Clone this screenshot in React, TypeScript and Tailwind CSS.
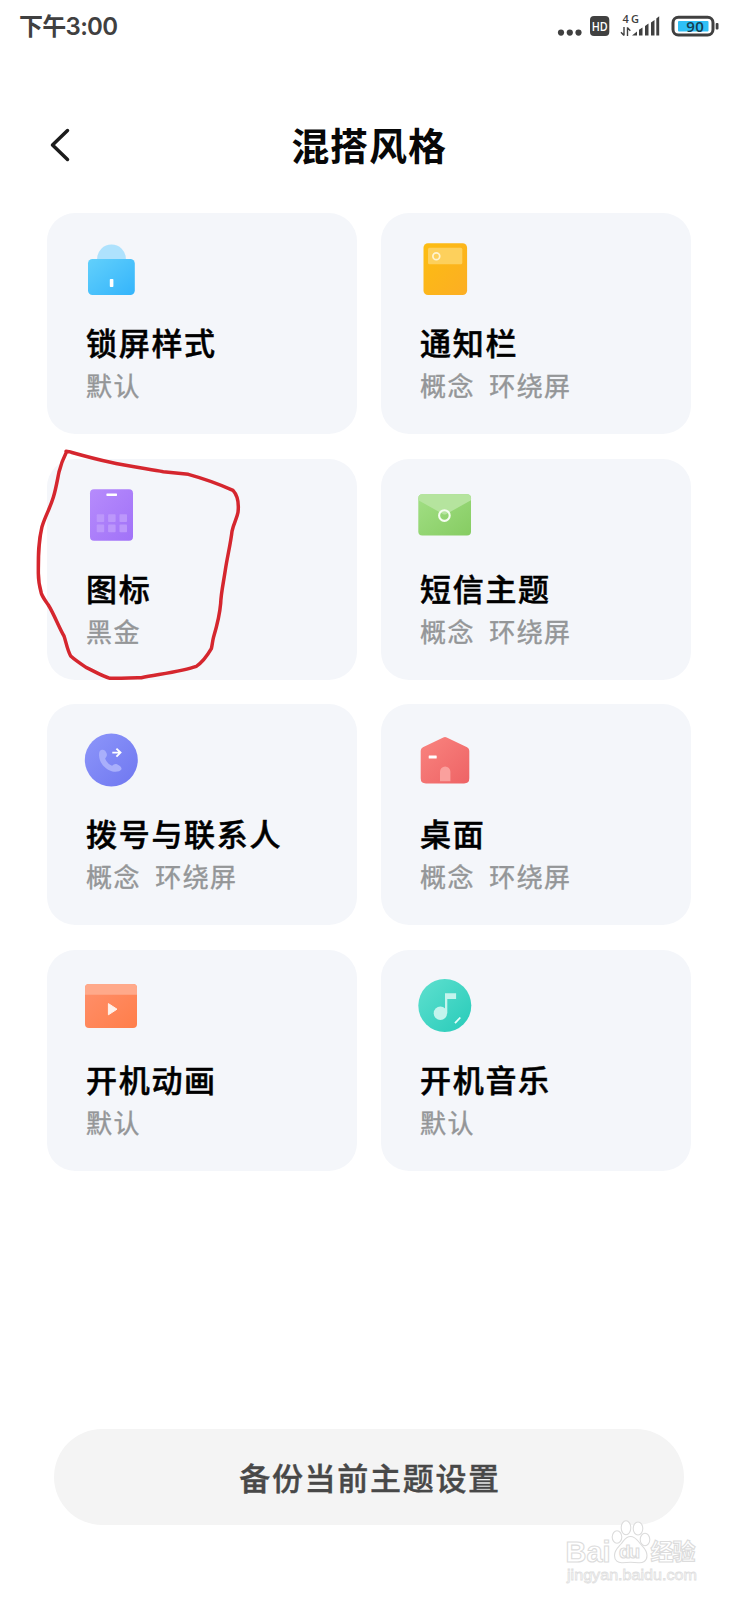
import type { ReactNode } from "react";

function Gradient({ id, from, to }: { id: string; from: string; to: string }) {
  return (
    <defs>
      <linearGradient id={id} x1="0" y1="0" x2="1" y2="1">
        <stop offset="0" stopColor={from} />
        <stop offset="1" stopColor={to} />
      </linearGradient>
    </defs>
  );
}

const LockIcon = (
  <>
    <Gradient id="lock" from="#62d0fb" to="#34b4fb" />
    <circle cx="30.5" cy="18.9" r="14.4" fill="#aee2fd" />
    <rect x="7" y="19" width="46.8" height="36" rx="4.5" fill="url(#lock)" />
    <rect x="28.8" y="39" width="3.6" height="8" rx="0.8" fill="#fff" />
  </>
);

const NotificationIcon = (
  <>
    <Gradient id="notification" from="#fcbd11" to="#fcae24" />
    <rect x="8.5" y="3.3" width="43.6" height="51.8" rx="4.5" fill="url(#notification)" />
    <rect x="13" y="7.7" width="34.3" height="16.6" rx="1.5" fill="#fdd05c" />
    <circle cx="21.3" cy="16.2" r="3.4" fill="none" stroke="#fff3cf" strokeWidth="1.7" />
  </>
);

const GridIcon = (
  <>
    <Gradient id="grid" from="#b68bfc" to="#a172f8" />
    <rect x="9" y="3.3" width="43" height="51.4" rx="4" fill="url(#grid)" />
    <rect x="25.4" y="7.5" width="10.6" height="2.4" rx="0.6" fill="#fff" />
    {[28.3, 38.6].map((y) =>
      [15.7, 27.1, 38.5].map((x) => (
        <rect key={`${x}-${y}`} x={x} y={y} width="7.5" height="7.7" rx="0.8" fill="#bc97fb" />
      )),
    )}
  </>
);

const MessageIcon = (
  <>
    <Gradient id="message" from="#a2df85" to="#86cc62" />
    <rect x="3.3" y="8.3" width="52.7" height="41.3" rx="4" fill="url(#message)" />
    <path d="M3.3 14.3v-2a4 4 0 0 1 4-4H52a4 4 0 0 1 4 4v2L31 28.2q-1.3.8-2.7 0z" fill="#b5e49e" />
    <circle cx="29.4" cy="29.6" r="5.3" fill="none" stroke="#f5fdf0" strokeWidth="2.1" />
  </>
);

const PhoneIcon = (
  <>
    <Gradient id="phone" from="#8d96fa" to="#6f77f0" />
    <circle cx="30.3" cy="28.9" r="26.5" fill="url(#phone)" />
    <path
      d="M20.2 18.9c2.6-.8 4.6.6 5.5 3.6.7 2.5-.7 3.7-1.6 5 1.2 3.3 3.8 6 6.9 7.3 1.5-1 2.8-2.4 5-1.5 2.8 1.1 4.9 3.2 4.5 5-1.2 2.3-5.7 3.1-9.1 2.1-7.9-2.2-13.3-9-13.4-16.700 0-2.500.8-4.500 2.200-4.800z"
      fill="#a9affb"
    />
    <path d="M31.3 21.6h8M35.4 17.6l4.1 4-4.1 4" fill="none" stroke="#fff" strokeWidth="1.9" />
  </>
);

const HomeIcon = (
  <>
    <Gradient id="home" from="#f9847f" to="#ee6365" />
    <path
      d="M28.3 6.5q1.7-.9 3.4 0l20.4 9.8q2.2 1.1 2.2 3.5v27.4q0 5.2-5.2 5.2H10.900q-5.200 0-5.200-5.200V19.800q0-2.400 2.200-3.500z"
      fill="url(#home)"
    />
    <rect x="13.7" y="24.6" width="8" height="3" rx="0.5" fill="#fff" />
    <path d="M25 50.300v-9.500a5.200 5.200 0 0 1 10.400 0v9.500z" fill="#faa09d" />
  </>
);

const AnimationIcon = (
  <>
    <Gradient id="animation" from="#ff906b" to="#ff7e4a" />
    <rect x="4" y="7" width="52" height="44" rx="4" fill="url(#animation)" />
    <path d="M4 17.8V11a4 4 0 0 1 4-4h44a4 4 0 0 1 4 4v6.800z" fill="#ffa98a" />
    <path d="M27.4 26.6v11.2l8.600-5.600z" fill="#fff1ea" stroke="#fff1ea" strokeLinejoin="round" />
  </>
);

const MusicIcon = (
  <>
    <Gradient id="music" from="#5fe0cf" to="#27cbb9" />
    <circle cx="29.8" cy="28.6" r="26.5" fill="url(#music)" />
    <circle cx="25.4" cy="36.2" r="6.7" fill="#c3f4ed" />
    <path d="M30 16.3h11.1V22h-8.8v14H30z" fill="#c3f4ed" />
    <path d="M40 46.2l5.3-5.700" stroke="#e6fffb" strokeWidth="1.8" />
  </>
);

const items: { title: string; value: string; icon: ReactNode }[] = [
  { title: "锁屏样式", value: "默认", icon: LockIcon },
  { title: "通知栏", value: "概念  环绕屏", icon: NotificationIcon },
  { title: "图标", value: "黑金", icon: GridIcon },
  { title: "短信主题", value: "概念  环绕屏", icon: MessageIcon },
  { title: "拨号与联系人", value: "概念  环绕屏", icon: PhoneIcon },
  { title: "桌面", value: "概念  环绕屏", icon: HomeIcon },
  { title: "开机动画", value: "默认", icon: AnimationIcon },
  { title: "开机音乐", value: "默认", icon: MusicIcon },
];

function StatusBar() {
  return (
    <div className="flex h-[54px] items-center justify-between pl-[19px] pr-[17px] text-[#404040]">
      <span className="font-['Inter','Noto_Sans_CJK_SC',sans-serif] text-[24px] font-semibold tracking-[-0.7px]">下午3:00</span>
      <svg width="164" height="54" viewBox="0 0 164 54" className="font-['Open_Sans',sans-serif]">
        <g fill="#404040">
          <circle cx="4" cy="32.6" r="3.1" />
          <circle cx="12.8" cy="32.6" r="3.1" />
          <circle cx="21.5" cy="32.6" r="3.1" />
          <rect x="33" y="16" width="19.3" height="20" rx="4" />
          <text x="34.7" y="30.6" fontSize="12.5" fontWeight="600" fill="#fff" textLength="16" lengthAdjust="spacingAndGlyphs">HD</text>
          <text x="65.6" y="22.8" fontSize="11" fontWeight="600" textLength="16.500">4G</text>
          <path d="M67 27v8.500M67 35.500l-3-3.200M70.500 36v-8.700M70.500 27.600l2.800 3.200" fill="none" stroke="#404040" strokeWidth="1.4" />
          <path d="M75 35.500l5-4v4zM82 29.700l3.500-2.300v8.100H82zM88 26l3.500-2.400v11.900H88zM94 22.500l3.500-2.400v15.400H94zM99.300 18.600l2.900-2.400v19.300h-2.900z" />
        </g>
        <rect x="116" y="17.3" width="40" height="17.6" rx="5.4" fill="#fff" stroke="#404040" strokeWidth="3" />
        <rect x="121" y="21" width="30.5" height="10.5" rx="1" fill="#2fc0f6" />
        <rect x="158.7" y="23" width="2.8" height="6.5" rx="1" fill="#404040" />
        <text x="129.3" y="31.7" fontSize="15" fontWeight="600" fill="#153d50" textLength="17.500">90</text>
      </svg>
    </div>
  );
}

function Watermark() {
  return (
    <svg
      width="150"
      height="72"
      viewBox="0 0 150 72"
      className="absolute left-[560px] top-[1516px] font-['Liberation_Sans','Noto_Sans_CJK_SC',sans-serif]"
      fill="#fff"
      stroke="#dcdcdc"
      strokeWidth="1.1"
    >
      <text x="5.5" y="45.5" fontSize="30" fontWeight="bold" textLength="45" lengthAdjust="spacingAndGlyphs">Bai</text>
      <ellipse cx="57" cy="21" rx="4.8" ry="6.3" />
      <ellipse cx="66" cy="11.8" rx="4.8" ry="7" />
      <ellipse cx="78" cy="12.5" rx="4.8" ry="6.5" />
      <ellipse cx="85" cy="23.5" rx="4.8" ry="6.3" />
      <path d="M70.5 20.5c5 0 7 4 10 7.500 3 3.500 6.500 6 6.500 11.500 0 6-4.500 7.500-8.500 7.200-5-.5-11-.5-16 0-4.500.3-8-2-8-7.200 0-5.500 3.500-8 6.500-11.500s4.500-7.500 9.500-7.500z" />
      <text x="59" y="42" fontSize="19" fontWeight="bold" textLength="21">du</text>
      <text x="90.500" y="43.500" fontSize="23" fontWeight="bold" textLength="45">经验</text>
      <text x="7" y="63.500" fontSize="15.500" textLength="130" lengthAdjust="spacingAndGlyphs" stroke="#e0e0e0" strokeWidth="0.8">
        jingyan.baidu.com
      </text>
    </svg>
  );
}

export default function App() {
  return (
    <main className="relative h-[1600px] w-[738px] overflow-hidden bg-white font-['Noto_Sans_CJK_SC',sans-serif]">
      <StatusBar />

      <header className="mt-[61px] grid h-[58px] grid-cols-[1fr_auto_1fr] items-center">
        <svg width="24" height="36" viewBox="0 0 24 36" className="ml-[48px] mt-0.5">
          <path d="M19.500 3.500L4.500 18l15 14.500" fill="none" stroke="#1c1c1c" strokeWidth="3.500" strokeLinecap="round" strokeLinejoin="round" />
        </svg>
        <h1 className="text-[38px] font-bold leading-[58px] tracking-[0.9px] text-[#080808]">混搭风格</h1>
      </header>

      <section className="mt-[40px] grid grid-cols-2 gap-x-6 gap-y-[24.6px] px-[47px]">
        {items.map((item) => (
          <article key={item.title} className="h-[221px] rounded-[28px] bg-[#f4f6fa] pt-[27px]">
            <svg width="60" height="60" viewBox="0 0 60 60" className="ml-[34px]">
              {item.icon}
            </svg>
            <div className="ml-[39px] mt-5">
              <h2 className="text-[31px] font-medium leading-[44px] tracking-[1.7px] text-black [-webkit-text-stroke:0.5px_#000]">
                {item.title}
              </h2>
              <p className="mt-[3px] whitespace-pre text-[26px] leading-9 tracking-[1.4px] text-[#949698] [-webkit-text-stroke:0.4px_#949698]">
                {item.value}
              </p>
            </div>
          </article>
        ))}
      </section>

      <button className="mx-[54px] mt-[258px] h-24 w-[630px] rounded-full bg-[#f4f4f4] pl-0.5 text-[31px] font-medium tracking-[1.7px] text-[#484848] [-webkit-text-stroke:0.4px_#484848]">
        备份当前主题设置
      </button>

      {/* hand-drawn marker around the icon theme card */}
      <svg width="220" height="250" viewBox="0 0 660 750" className="absolute left-[30px] top-[440px]">
        <path
          d="M108 34L117 35C160 47 195 57 238 66C290 78 350 86 400 95L475 103C515 114 560 129 609 151C622 165 627 190 624 217C621 235 611 250 606 274C602 310 592 350 586 390C580 430 573 460 572 490C569 525 560 560 551 590C547 605 547 615 544 626C530 650 520 665 499 679C460 693 390 702 334 713C300 714 270 715 240 715C215 708 190 692 168 682C150 670 135 660 122 648C112 630 108 605 102 588C88 565 72 522 55 495C45 480 38 472 34 460C27 435 25 420 25 400C25 350 24 310 36 260C45 230 60 205 70 172C78 145 82 120 87 96C93 72 100 55 109 37"
          fill="none"
          stroke="#d5262e"
          strokeWidth="10.5"
          strokeLinecap="round"
          strokeLinejoin="round"
        />
      </svg>

      <Watermark />
    </main>
  );
}
